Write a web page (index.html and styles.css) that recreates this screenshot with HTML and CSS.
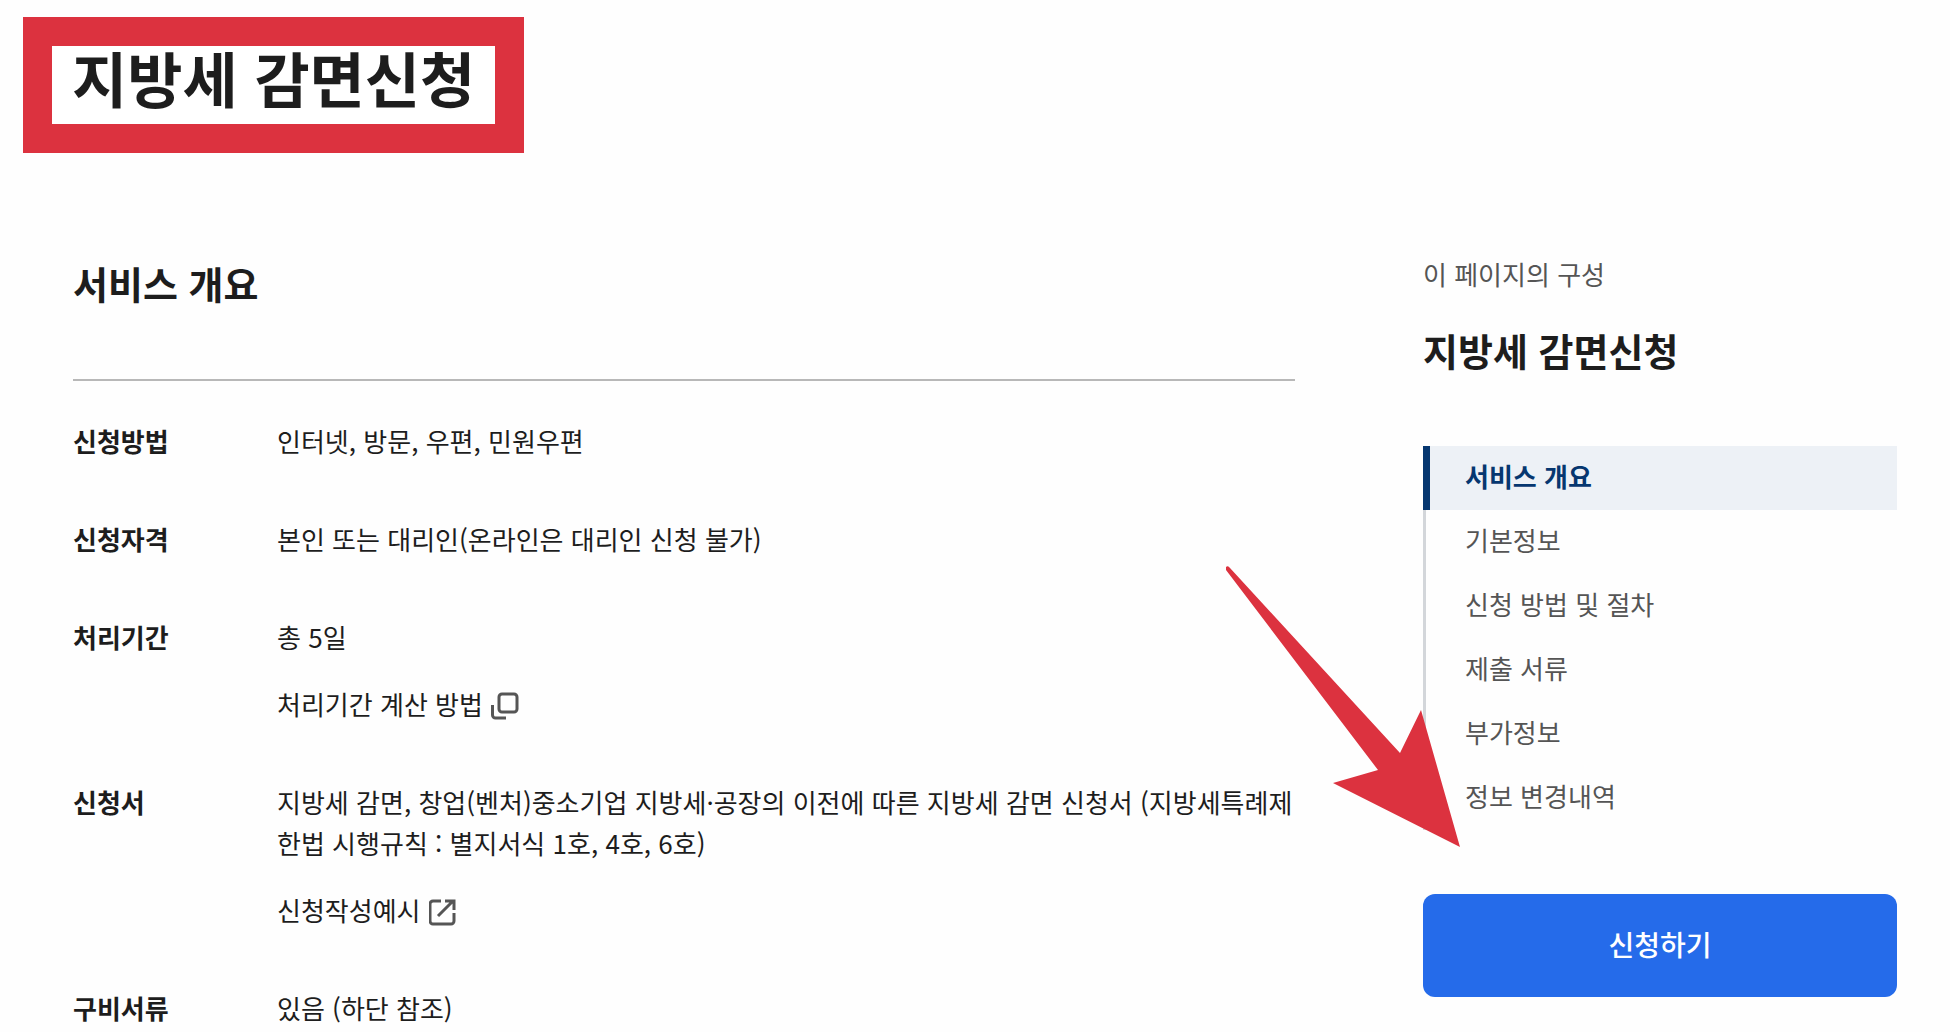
FILE: index.html
```
<!DOCTYPE html>
<html lang="ko">
<head>
  <meta charset="UTF-8" />
  <meta name="viewport" content="width=device-width, initial-scale=1.0"/>
  <title>지방세 감면신청</title>
  <link rel="stylesheet" href="styles.css">
</head>
<body>
  <header class="page-header">
    <h1>지방세 감면신청</h1>
  </header>

  <div class="container">
    <main>
      <h2>서비스 개요</h2>
      <dl class="info-list">
        <dt>신청방법</dt>
        <dd>인터넷, 방문, 우편, 민원우편</dd>

        <dt>신청자격</dt>
        <dd>본인 또는 대리인(온라인은 대리인 신청 불가)</dd>

        <dt>처리기간</dt>
        <dd>
          <p>총 5일</p>
          <a href="#period" class="info-link">처리기간 계산 방법
            <svg class="icon" viewBox="0 0 28 28" aria-hidden="true">
              <rect x="8" y="2" width="18" height="18" rx="3"/>
              <path d="M1.500 13v10a3 3 0 0 0 3 3H15"/>
            </svg>
          </a>
        </dd>

        <dt>신청서</dt>
        <dd>
          <p>지방세 감면, 창업(벤처)중소기업 지방세·공장의 이전에 따른 지방세 감면 신청서 (지방세특례제한법 시행규칙 : 별지서식 1호, 4호, 6호)</p>
          <a href="#example" class="info-link">신청작성예시
            <svg class="icon" viewBox="0 0 28 28" aria-hidden="true">
              <path d="M12 3H4a3 3 0 0 0-3 3v17a3 3 0 0 0 3 3h18a3 3 0 0 0 3-3v-8"/>
              <path d="M9 18L23 4M16 3H25v9"/>
            </svg>
          </a>
        </dd>

        <dt>구비서류</dt>
        <dd>있음 (하단 참조)</dd>
      </dl>
    </main>

    <aside>
      <p class="side-label">이 페이지의 구성</p>
      <p class="side-title">지방세 감면신청</p>
      <nav class="side-nav">
        <a href="#overview" class="active">서비스 개요</a>
        <a href="#basic">기본정보</a>
        <a href="#method">신청 방법 및 절차</a>
        <a href="#documents">제출 서류</a>
        <a href="#extra">부가정보</a>
        <a href="#history">정보 변경내역</a>
        <svg class="arrow" viewBox="0 0 236 284" aria-hidden="true">
          <path d="M2 1Q4-1 6 2L176 187L197 144L236 281L109 217L154 204L2 4Z"/>
        </svg>
      </nav>
      <button type="button" class="apply-btn">신청하기</button>
    </aside>
  </div>
</body>
</html>
```

FILE: styles.css
```
* {
  box-sizing: border-box;
}

body {
  margin: 0;
  background-color: #fefefe;
  color: #1d1d1d;
  font-family: 'Noto Sans CJK KR', sans-serif;
  font-size: 26px;
  line-height: 41px;
}

h1, h2, p, dl, dd {
  margin: 0;
}

a {
  color: inherit;
  text-decoration: none;
}

.page-header {
  display: flex;
  padding: 17px 23px 0;
}

h1 {
  padding: 0 20px 16px;
  border: 29px solid #dc323f;
  background-color: #ffffff;
  font-size: 60px;
  line-height: 62px;
}

.container {
  display: grid;
  grid-template-columns: minmax(0, 1fr) 474px;
  gap: 128px;
  padding: 100px 53px 0 73px;
}

h2 {
  padding: 4px 0 70px;
  border-bottom: 2px solid #b8b8b8;
  font-size: 38px;
  line-height: 52px;
}

.info-list {
  display: grid;
  grid-template-columns: 204px minmax(0, 1fr);
  row-gap: 57px;
  padding-top: 39px;
}

dt {
  font-weight: bold;
}

dd {
  word-break: break-all;
}

.info-link {
  display: flex;
  align-items: center;
  gap: 8px;
  margin-top: 26px;
}

.icon {
  width: 28px;
  height: 28px;
  margin-top: 4px;
  fill: none;
  stroke: #555555;
  stroke-width: 3;
}

.side-label {
  color: #555555;
}

.side-title {
  padding: 30px 0 70px;
  font-size: 38px;
  font-weight: bold;
  line-height: 52px;
}

.side-nav {
  position: relative;
  display: flex;
  flex-direction: column;
  color: #555555;
}

.side-nav a {
  padding: 9px 39px 14px;
  border-left: 3px solid #d3d6da;
}

.side-nav a.active {
  padding-left: 35px;
  border-left: 7px solid #063770;
  background-color: #edf1f6;
  color: #063770;
  font-weight: bold;
}

/* arrow pointing at the apply button */
.arrow {
  position: absolute;
  top: 120px;
  left: -199px;
  width: 236px;
  height: 284px;
  overflow: visible;
  fill: #dc323f;
  pointer-events: none;
}

.apply-btn {
  display: block;
  width: 100%;
  height: 103px;
  margin-top: 64px;
  padding: 0 0 4px;
  border: none;
  border-radius: 12px;
  background-color: #256bea;
  color: white;
  font-family: inherit;
  font-size: 28px;
  font-weight: 500;
  cursor: pointer;
}
```
